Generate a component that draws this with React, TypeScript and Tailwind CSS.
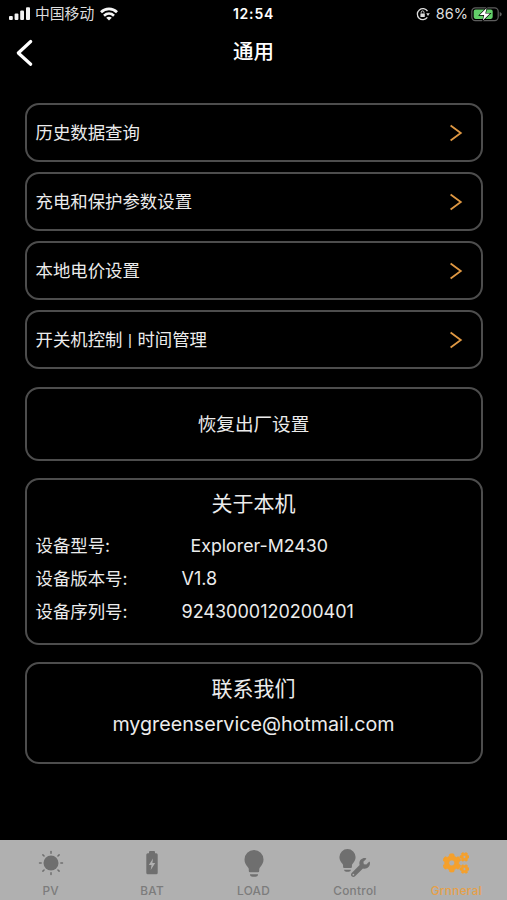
import type { ReactNode } from "react";
import { FaCogs, FaWrench } from "react-icons/fa";

const card = "w-[458px] shrink-0 rounded-[14px] border-2 border-[#4d4d4d]";

function StatusBar() {
  return (
    <div className="grid h-7 shrink-0 grid-cols-3 items-center text-[#dedede]">
      <div className="flex items-center pl-[9px]">
        <svg width="22" height="14" viewBox="0 0 22 14" fill="#f4f4f4">
          <rect x="0" y="9" width="3.8" height="4" rx="1" />
          <rect x="5.6" y="6.6" width="3.8" height="6.4" rx="1" />
          <rect x="11.2" y="3.6" width="3.8" height="9.4" rx="1" />
          <rect x="17" y="0.3" width="4" height="12.7" rx="1" />
        </svg>
        <span className="ml-[4px] text-[14.8px] leading-none">中国移动</span>
        <svg className="ml-[6px]" width="18" height="14" viewBox="0 0 18 14" fill="none" stroke="#f4f4f4" strokeWidth="2.7">
          <path d="M1 5.2C5.5.7 12.5.7 17 5.2" />
          <path d="M4 8.7C7 6 11 6 14 8.7" />
          <path d="M6.2 10.8C7.8 9.4 10.2 9.4 11.8 10.8L9 13.6Z" fill="#f4f4f4" stroke="none" />
        </svg>
      </div>
      <div className="text-center text-[14px] font-semibold leading-none tracking-[0.8px] text-white">12:54</div>
      <div className="flex items-center justify-end pr-[5px]">
        <svg width="14" height="14" viewBox="0 0 14 14" fill="none" stroke="#dedede" strokeWidth="1.3">
          <path d="M11.5 4.2A5.5 5.5 0 1 0 11.3 10.4" />
          <path d="M10.2 6.3h3.6L12 9z" fill="#dedede" stroke="none" />
          <rect x="4.4" y="6.5" width="4.4" height="3.5" rx=".5" fill="#dedede" stroke="none" />
          <path d="M5.2 6.5V5.3a1.4 1.4 0 0 1 2.8 0v1.2" strokeWidth=".9" />
        </svg>
        <span className="ml-[6px] text-[14.5px] leading-none">86%</span>
        <svg className="ml-[3px]" width="31" height="15" viewBox="0 0 31 15">
          <rect x=".8" y=".8" width="26.4" height="12.9" rx="3.6" fill="none" stroke="#5e5e5e" strokeWidth="1.2" />
          <rect x="2.7" y="2.6" width="19" height="9.3" rx="1.8" fill="#63cf6a" />
          <path d="M28.7 5v4.6c1.4-.5 2-1.3 2-2.3s-.6-1.8-2-2.3z" fill="#5e5e5e" />
          <path d="M15.6 1 8.6 8.1h4.6L11.8 13.6 19 6.5h-4.7z" fill="#fff" stroke="#000" strokeWidth="1.2" paintOrder="stroke" />
        </svg>
      </div>
    </div>
  );
}

function MenuRow({ label }: { label: ReactNode }) {
  return (
    <button className={`${card} flex h-[59px] items-center justify-between pl-[9px] pr-[18px]`}>
      <span className="text-[17.4px] leading-none">{label}</span>
      <svg width="14" height="18" viewBox="0 0 14 18" fill="none" stroke="#df9843" strokeWidth="1.8">
        <path d="M1.6 1.5 11.8 9 1.6 16.5" />
      </svg>
    </button>
  );
}

function InfoRow({ label, value, inset }: { label: string; value: string; inset?: boolean }) {
  return (
    <div className="flex h-[33px] items-center leading-none">
      <span className="w-[146px] text-[17.4px]">{label}</span>
      <span className={inset ? "pl-[9px] text-[17.8px]" : "text-[18px]"}>{value}</span>
    </div>
  );
}

function Bulb({ className }: { className?: string }) {
  return (
    <svg className={className} viewBox="0 0 20 27" fill="currentColor">
      <path d="M10 0a9.500 9.500 0 0 0-9.500 9.500c0 3.200 1.400 5.400 3 7.200.8.900 1.300 1.700 1.300 2.700V21q0 1.200 1.200 1.200h8q1.200 0 1.200-1.200v-1.600c0-1 .5-1.800 1.300-2.700 1.600-1.800 3-4 3-7.200A9.500 9.500 0 0 0 10 0z" />
      <path d="M6 24.300h8v.4c0 1-1.300 2-2.600 2H8.600c-1.300 0-2.600-1-2.600-2z" />
    </svg>
  );
}

function Sun() {
  return (
    <svg width="26" height="26" viewBox="-13 -13 26 26" fill="currentColor" stroke="currentColor">
      <circle r="7.5" stroke="none" />
      {[0, 45, 90, 135, 180, 225, 270, 315].map((a) => (
        <path key={a} d="M0-9.800V-11.500" strokeWidth="1.500" strokeLinecap="round" transform={`rotate(${a})`} />
      ))}
    </svg>
  );
}

function Battery() {
  return (
    <svg width="12" height="24" viewBox="0 0 12 24">
      <path d="M3 2.200V1q0-1 1-1h4q1 0 1 1v1.200h1.200q1.500 0 1.500 1.500v18q0 1.500-1.500 1.500H1.800q-1.500 0-1.500-1.500v-18q0-1.500 1.500-1.500z" fill="currentColor" />
      <path d="M7 7.500 2.800 14h2.700l-.8 5 4.500-7H6.400z" fill="#b0b0b0" />
    </svg>
  );
}

function Tab({ label, icon, active }: { label: string; icon: ReactNode; active?: boolean }) {
  return (
    <button className={`flex flex-1 flex-col items-center pt-[7px] ${active ? "text-[#f5a02c]" : "text-[#6f6f6f]"}`}>
      <span className="flex h-[32px] items-center justify-center">{icon}</span>
      <span className={`mt-[5px] text-[11.8px] font-medium leading-[14px] tracking-[0.3px] ${active ? "text-[#e6a049]" : "text-[#7c7c7c]"}`}>{label}</span>
    </button>
  );
}

export default function App() {
  return (
    <div className="flex h-[900px] w-[507px] flex-col overflow-hidden bg-black font-[Inter,'Noto_Sans_CJK_SC',sans-serif] text-[#ececec]">
      <StatusBar />
      <header className="grid h-[49px] shrink-0 grid-cols-3 items-center">
        <button className="pl-[15px]">
          <svg width="18" height="28" viewBox="0 0 18 28" fill="none" stroke="#fff" strokeWidth="3.2" strokeLinecap="round" strokeLinejoin="round">
            <path d="M15.7 2.500 3.300 14 15.700 25.200" />
          </svg>
        </button>
        <h1 className="text-center text-[20.5px] font-medium leading-none text-white">通用</h1>
      </header>
      <main className="flex flex-1 flex-col items-center pt-[26px]">
        <div className="flex flex-col gap-[10px]">
          <MenuRow label="历史数据查询" />
          <MenuRow label="充电和保护参数设置" />
          <MenuRow label="本地电价设置" />
          <MenuRow
            label={
              <>
                开关机控制<span className="mx-[5.500px] inline-block align-[1px] font-['Liberation_Sans'] text-[15px]">|</span>时间管理
              </>
            }
          />
        </div>
        <button className={`${card} mt-[18px] h-[74px] text-[18.6px] leading-none`}>恢复出厂设置</button>
        <section className={`${card} mt-[17px] h-[167px] pl-[9px] pt-[13px]`}>
          <h2 className="mb-[15px] pr-[9px] text-center text-[21px] leading-[21px]">关于本机</h2>
          <InfoRow label="设备型号:" value="Explorer-M2430" inset />
          <InfoRow label="设备版本号:" value="V1.8" />
          <InfoRow label="设备序列号:" value="9243000120200401" />
        </section>
        <section className={`${card} mt-[17px] h-[102px] pt-[14px] text-center`}>
          <h2 className="text-[21px] leading-[21px]">联系我们</h2>
          <p className="mt-[13px] text-[19.7px] leading-[24px]">mygreenservice@hotmail.com</p>
        </section>
      </main>
      <nav className="flex h-[60px] shrink-0 bg-[#b0b0b0]">
        <Tab label="PV" icon={<Sun />} />
        <Tab label="BAT" icon={<Battery />} />
        <Tab label="LOAD" icon={<Bulb className="h-[27px] w-[20px]" />} />
        <Tab
          label="Control"
          icon={
            <span className="flex items-start">
              <Bulb className="h-[23px] w-[17px]" />
              <FaWrench size={19} className="mt-[9px] -ml-[5px]" />
            </span>
          }
        />
        <Tab label="Grnneral" active icon={<FaCogs size={26} stroke="currentColor" strokeWidth={18} />} />
      </nav>
    </div>
  );
}
